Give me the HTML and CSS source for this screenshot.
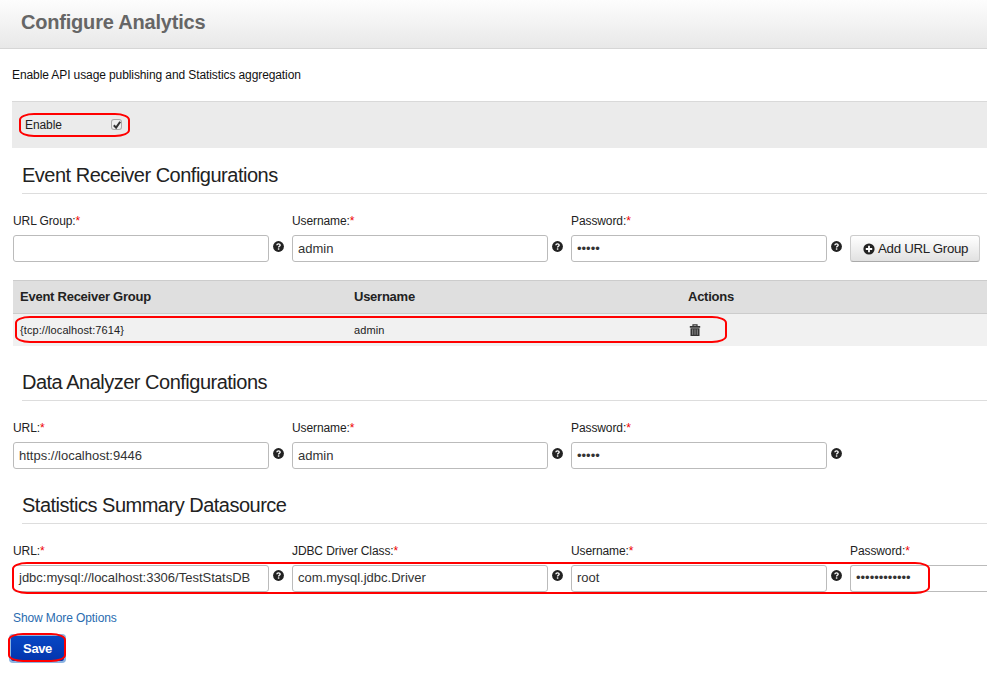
FILE: index.html
```html
<!DOCTYPE html>
<html lang="en">
<head>
<meta charset="utf-8">
<title>Configure Analytics</title>
<link rel="stylesheet" href="styles.css">
</head>
<body>
<svg class="defs" width="0" height="0">
  <symbol id="help" viewBox="0 0 12 12"><circle cx="6" cy="6" r="5.9" fill="#222"/><path d="M4.2 4.7C4.3 2.5 7.9 2.6 7.8 4.6C7.8 5.8 6.1 5.8 6.1 7.1" fill="none" stroke="#fff" stroke-width="1.5"/><rect x="5.3" y="8" width="1.6" height="1.5" fill="#fff"/></symbol>
</svg>
<header class="page-header"><h1>Configure Analytics</h1></header>
<main>
  <p class="intro">Enable API usage publishing and Statistics aggregation</p>
  <div class="enable-bar">
    <label class="enable">Enable
      <span class="check"><svg width="10" height="10" viewBox="0 0 10 10"><path d="M1.8 5.2L4.1 7.6L8.2 1.7" fill="none" stroke="#333" stroke-width="2"/></svg></span>
    </label>
    <i class="mark mark-enable"></i>
  </div>

  <section>
    <h2>Event Receiver Configurations</h2>
    <div class="fields with-table">
      <div class="field"><label>URL Group:<b>*</b></label><div class="control"><span class="input"></span><svg class="help"><use href="#help"/></svg></div></div>
      <div class="field"><label>Username:<b>*</b></label><div class="control"><span class="input">admin</span><svg class="help"><use href="#help"/></svg></div></div>
      <div class="field"><label>Password:<b>*</b></label><div class="control"><span class="input">•••••</span><svg class="help"><use href="#help"/></svg></div></div>
      <button class="add" type="button"><svg width="12" height="12" viewBox="0 0 12 12"><circle cx="6" cy="6" r="5.6" fill="#222"/><path d="M6 2.8V9.2M2.8 6H9.2" stroke="#fff" stroke-width="1.8"/></svg><span>Add URL Group</span></button>
    </div>
    <div class="table">
      <div class="row head"><span>Event Receiver Group</span><span>Username</span><span>Actions</span></div>
      <div class="row"><span>{tcp://localhost:7614}</span><span>admin</span><span><svg class="trash" width="12" height="13" viewBox="0 0 12 13"><path d="M4 2V.8H8V2" fill="none" stroke="#333" stroke-width="1.2"/><path d="M.8 2H11.2V3.7H.8ZM1.5 4.3H10.5V12H1.5Z" fill="#333"/><path d="M3.7 5.3V10.8M6 5.3V10.8M8.3 5.3V10.8" stroke="#999" stroke-width=".9"/></svg></span></div>
      <i class="mark mark-row"></i>
    </div>
  </section>

  <section>
    <h2>Data Analyzer Configurations</h2>
    <div class="fields">
      <div class="field"><label>URL:<b>*</b></label><div class="control"><span class="input">https://localhost:9446</span><svg class="help"><use href="#help"/></svg></div></div>
      <div class="field"><label>Username:<b>*</b></label><div class="control"><span class="input">admin</span><svg class="help"><use href="#help"/></svg></div></div>
      <div class="field"><label>Password:<b>*</b></label><div class="control"><span class="input">•••••</span><svg class="help"><use href="#help"/></svg></div></div>
    </div>
  </section>

  <section>
    <h2>Statistics Summary Datasource</h2>
    <div class="fields source">
      <div class="field"><label>URL:<b>*</b></label><div class="control"><span class="input">jdbc:mysql://localhost:3306/TestStatsDB</span><svg class="help"><use href="#help"/></svg></div></div>
      <div class="field"><label>JDBC Driver Class:<b>*</b></label><div class="control"><span class="input">com.mysql.jdbc.Driver</span><svg class="help"><use href="#help"/></svg></div></div>
      <div class="field"><label>Username:<b>*</b></label><div class="control"><span class="input">root</span><svg class="help"><use href="#help"/></svg></div></div>
      <div class="field last"><label>Password:<b>*</b></label><span class="input">••••••••••••</span></div>
      <i class="mark mark-source"></i>
    </div>
  </section>

  <a class="more" href="#">Show More Options</a>
  <div class="actions"><button class="save" type="button">Save</button><i class="mark mark-save"></i></div>
</main>
</body>
</html>
```
FILE: styles.css
```css
* { box-sizing: border-box; }
body {
  margin: 0;
  height: 674px;
  overflow: hidden;
  background: #fff;
  color: #222;
  font: 12px/18px "Liberation Sans", Arial, sans-serif;
  letter-spacing: -0.1px;
}
svg { display: block; }
.defs { position: absolute; }
.page-header {
  height: 49px;
  padding-left: 21px;
  border-bottom: 1px solid #d6d6d6;
  background: linear-gradient(#fdfdfd, #e8e8e8);
}
h1 { margin: 0; font-size: 20px; line-height: 44px; letter-spacing: -0.2px; color: #666; }
.intro { margin: 0; height: 52px; padding: 17px 0 0 12px; color: #111; }
.enable-bar {
  position: relative;
  height: 47px;
  margin-left: 12px;
  padding: 14px 0 0 13px;
  border-top: 1px solid #d9d9d9;
  background: #ebebeb;
}
.enable { display: flex; justify-content: space-between; width: 96px; }
.check {
  width: 9px;
  height: 9px;
  margin-top: 4px;
  border-radius: 2px;
  background: #eee;
  box-shadow: 0 0 0 1px #aaa;
}
h2 {
  height: 46px;
  margin: 0 0 0 22px;
  border-bottom: 1px solid #ddd;
  font-size: 20px;
  font-weight: 400;
  line-height: 54px;
  letter-spacing: -0.5px;
}
.fields { position: relative; display: flex; gap: 23px; height: 77px; padding: 18px 0 0 13px; }
.fields.with-table { height: 84px; }
.field { flex: none; width: 256px; }
.field label { display: block; height: 23px; }
.field b { color: #e00; font-weight: 400; }
.control { display: flex; gap: 4px; width: 272px; }
.input {
  display: block;
  flex: none;
  width: 256px;
  height: 27px;
  padding-left: 5px;
  border: 1px solid #bbb;
  border-radius: 3px;
  color: #333;
  font-size: 13px;
  line-height: 25px;
  letter-spacing: 0;
  white-space: nowrap;
}
.source .input { line-height: 23px; }
.last { flex: 1; min-width: 0; }
.last .input { width: 100%; border-right: 0; border-radius: 3px 0 0 3px; }
.help { width: 11px; height: 11px; margin-top: 6px; }
.source .help { margin-top: 5px; }
.add {
  display: flex;
  align-items: center;
  gap: 3px;
  flex: none;
  width: 130px;
  height: 27px;
  margin-top: 23px;
  padding: 0 0 0 12px;
  border: 1px solid #ccc;
  border-bottom-color: #aaa;
  border-radius: 3px;
  background: linear-gradient(#fff, #e1e1e1);
  color: #222;
  font: 13.3px "Liberation Sans", Arial, sans-serif;
  letter-spacing: -0.3px;
  white-space: nowrap;
}
.table { position: relative; margin: 2px 0 9px 13px; }
.row {
  display: grid;
  grid-template-columns: 334px 334px 1fr;
  height: 33px;
  padding-left: 7px;
  border-top: 1px solid #ccc;
  background: #f1f1f1;
  font-size: 11px;
  line-height: 33px;
  letter-spacing: 0.08px;
}
.row.head { background: #dfdfdf; font-size: 13px; font-weight: 700; line-height: 32px; letter-spacing: -0.25px; }
.trash { margin: 10px 0 0 1px; }
.more { display: block; height: 27px; padding-left: 13px; margin-top: 8px; color: #2a6cb0; text-decoration: none; }
.actions { position: relative; height: 30px; padding-left: 11px; }
.save {
  display: block;
  width: 53px;
  height: 25px;
  padding: 0;
  border: 0;
  border-radius: 2px;
  background: linear-gradient(#0747c4, #0335ad);
  box-shadow: 0 0 0 2px #8cb4e2;
  color: #fff;
  font: 700 13px "Liberation Sans", Arial, sans-serif;
  letter-spacing: -0.4px;
}
.mark { position: absolute; border: 2px solid #f00; border-radius: 15px / 7px; pointer-events: none; }
.mark-enable { left: 7px; top: 11px; width: 111px; height: 24px; }
.mark-row { left: 2px; top: 36px; width: 712px; height: 27px; }
.mark-source { left: 12px; top: 38px; width: 918px; height: 32px; }
.mark-save { left: 8px; top: -3px; width: 58px; height: 29px; }
```
